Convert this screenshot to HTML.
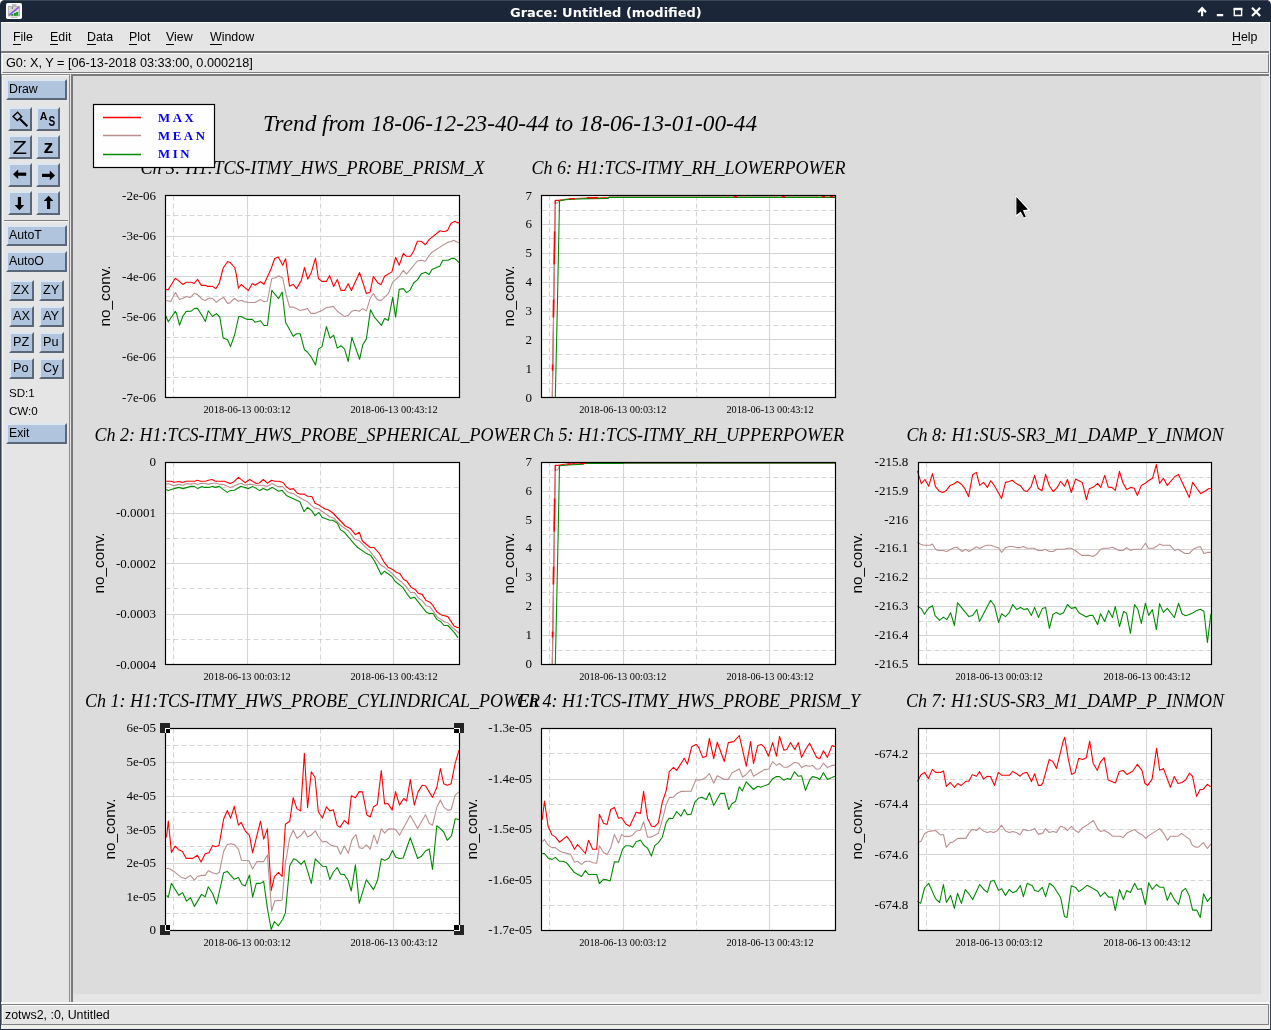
<!DOCTYPE html>
<html><head><meta charset="utf-8"><title>Grace: Untitled (modified)</title>
<style>
html,body{margin:0;padding:0;}
body{width:1271px;height:1030px;overflow:hidden;background:#fff;position:relative;font-family:"Liberation Sans",sans-serif;font-size:12px;color:#000;}
div{position:absolute;box-sizing:border-box;will-change:transform;}
#win{left:0;top:0;width:1271px;height:1030px;background:#1b2638;border-radius:5px 5px 0 0;}
#title{left:0;top:0;width:1271px;height:22px;color:#fff;font-family:"DejaVu Sans","Liberation Sans",sans-serif;font-weight:bold;font-size:13px;padding-left:510px;line-height:23px;white-space:nowrap;border-top:1px solid #3b4858;border-radius:5px 5px 0 0;}
#main{left:1px;top:22px;width:1269px;height:1007px;background:#e5e5e5;border-top:1px solid #fff;border-right:1px solid #f4f4f4;}
.mi{top:30px;height:14px;line-height:14px;font-size:12.4px;white-space:nowrap;}
.mi u{text-decoration:none;border-bottom:1px solid #000;}
.btn{background:#b0c4de;border-style:solid;border-width:2px;border-color:#dde5f0 #596779 #596779 #dde5f0;font-size:12.3px;line-height:1;white-space:nowrap;}
.lb{left:6px;width:61px;height:21px;padding:2px 0 0 1px;}
.sb{width:24px;height:24px;}
.tb{width:25px;height:21px;padding:2px 0 0 2px;font-size:12.7px;}
</style></head><body>
<div id="win"></div>
<div id="title">Grace: Untitled (modified)</div>
<div id="main"></div>
<div style="left:0;top:22px;width:1px;height:1008px;background:#323f4e"></div>
<div style="left:1270px;top:22px;width:1px;height:1008px;background:#323f4e"></div>
<!-- menu -->
<div class="mi" style="left:13px"><u>F</u>ile</div>
<div class="mi" style="left:50px"><u>E</u>dit</div>
<div class="mi" style="left:87px"><u>D</u>ata</div>
<div class="mi" style="left:129px"><u>P</u>lot</div>
<div class="mi" style="left:166px"><u>V</u>iew</div>
<div class="mi" style="left:210px"><u>W</u>indow</div>
<div class="mi" style="left:1232px"><u>H</u>elp</div>
<div style="left:1px;top:51px;width:1268px;height:2px;background:#7a7a7a"></div>
<!-- locator -->
<div style="left:2px;top:53px;width:1267px;height:20px;border:1px solid;border-color:#fbfbfb #7f7f7f #7f7f7f #fbfbfb;"></div>
<div style="left:1px;top:73px;width:1268px;height:1px;background:#f8f8f8"></div>
<div style="left:6px;top:56px;font-size:12.7px;line-height:14px;white-space:nowrap;">G0: X, Y = [06-13-2018 03:33:00, 0.000218]</div>
<!-- left panel -->
<div style="left:1px;top:74px;width:69px;height:929px;border:1px solid #8a8a8a;"></div>
<div style="left:2px;top:75px;width:67px;height:1px;background:#f6f6f6"></div>
<div style="left:2px;top:75px;width:1px;height:927px;background:#f6f6f6"></div>
<div class="btn lb" style="top:79px">Draw</div>
<div class="btn sb" style="left:8px;top:107px"></div>
<div class="btn sb" style="left:36px;top:107px"></div>
<div class="btn sb" style="left:8px;top:135px"></div>
<div class="btn sb" style="left:36px;top:135px"></div>
<div class="btn sb" style="left:8px;top:163px"></div>
<div class="btn sb" style="left:36px;top:163px"></div>
<div class="btn sb" style="left:8px;top:191px"></div>
<div class="btn sb" style="left:36px;top:191px"></div>

<div style="left:4px;top:220px;width:64px;height:1px;background:#7f7f7f"></div>
<div style="left:4px;top:221px;width:64px;height:1px;background:#f4f4f4"></div>
<div class="btn lb" style="top:225px">AutoT</div>
<div class="btn lb" style="top:251px">AutoO</div>
<div class="btn tb" style="left:9px;top:280px">ZX</div>
<div class="btn tb" style="left:39px;top:280px">ZY</div>
<div class="btn tb" style="left:9px;top:306px">AX</div>
<div class="btn tb" style="left:39px;top:306px">AY</div>
<div class="btn tb" style="left:9px;top:332px">PZ</div>
<div class="btn tb" style="left:39px;top:332px">Pu</div>
<div class="btn tb" style="left:9px;top:358px">Po</div>
<div class="btn tb" style="left:39px;top:358px">Cy</div>
<div style="left:9px;top:386px;line-height:14px;font-size:11.6px">SD:1</div>
<div style="left:9px;top:404px;line-height:14px;font-size:11.6px">CW:0</div>
<div class="btn lb" style="top:423px">Exit</div>
<!-- canvas frame -->
<div style="left:71px;top:74px;width:1198px;height:928px;border-left:2px solid #7a7a7a;border-top:2px solid #7a7a7a;background:#e5e5e5"></div>
<div id="canvas" style="left:73px;top:76px;width:1188px;height:918px;background:#dcdcdc;"></div>
<!-- bottom status -->
<div style="left:1px;top:1002px;width:1268px;height:2px;background:#f8f8f8"></div>
<div style="left:1px;top:1004px;width:1268px;height:21px;border:1px solid #808080;"></div>
<div style="left:2px;top:1005px;width:1266px;height:1px;background:#fafafa"></div>
<div style="left:2px;top:1005px;width:1px;height:19px;background:#fafafa"></div>
<div style="left:1px;top:1025px;width:1268px;height:4px;background:#efefec"></div>
<div style="left:5px;top:1008px;line-height:14px;font-size:12.4px;white-space:nowrap;">zotws2, :0, Untitled</div>
<svg width="1271" height="1030" viewBox="0 0 1271 1030" style="position:absolute;left:0;top:0;will-change:transform;opacity:0.999">
<g font-family="'Liberation Serif',serif" fill="#000">
<text x="510" y="131" font-size="23.25" font-style="italic" text-anchor="middle">Trend from 18-06-12-23-40-44 to 18-06-13-01-00-44</text>
<text x="312.5" y="173.7" font-size="18" font-style="italic" text-anchor="middle">Ch 3: H1:TCS-ITMY_HWS_PROBE_PRISM_X</text>
<rect x="165.5" y="195.5" width="294" height="202" fill="#fff"/>
<path d="M247.5 195.5V397.5" stroke="#d5d5d5" stroke-width="1.1"/><path d="M393.5 195.5V397.5" stroke="#d5d5d5" stroke-width="1.1"/><path d="M173.5 195.5V397.5" stroke="#d5d5d5" stroke-width="1.1" stroke-dasharray="5 3"/><path d="M320.5 195.5V397.5" stroke="#d5d5d5" stroke-width="1.1" stroke-dasharray="5 3"/><path d="M165.5 236.5H459.5" stroke="#d5d5d5" stroke-width="1.1"/><path d="M165.5 276.5H459.5" stroke="#d5d5d5" stroke-width="1.1"/><path d="M165.5 316.5H459.5" stroke="#d5d5d5" stroke-width="1.1"/><path d="M165.5 357.5H459.5" stroke="#d5d5d5" stroke-width="1.1"/><path d="M165.5 215.5H459.5" stroke="#d5d5d5" stroke-width="1.1" stroke-dasharray="5 3"/><path d="M165.5 256.5H459.5" stroke="#d5d5d5" stroke-width="1.1" stroke-dasharray="5 3"/><path d="M165.5 296.5H459.5" stroke="#d5d5d5" stroke-width="1.1" stroke-dasharray="5 3"/><path d="M165.5 337.5H459.5" stroke="#d5d5d5" stroke-width="1.1" stroke-dasharray="5 3"/><path d="M165.5 377.5H459.5" stroke="#d5d5d5" stroke-width="1.1" stroke-dasharray="5 3"/>
<g fill="none" stroke-width="1.1" stroke-linejoin="round" clip-path="none">
<polyline points="165.9,289.6 168.3,289.6 175.3,278.3 178.5,280.6 182.9,284.5 186.3,282.3 191.2,282.3 194.1,283.5 197.5,279.3 201.3,285.4 205.7,285.4 207.7,286.4 212.5,286.4 215.9,288.6 219.3,283 223.2,268 227.6,261.5 230,262.4 234.7,267.5 236.3,274.3 238.5,288.3 241.2,284.5 248.4,290.6 252.3,283.5 255,285.3 260.5,281.7 264,284.3 271,269 274.7,258.5 278.3,257 282.7,265.3 285.6,258.8 289.5,286.2 293.2,284.3 296.5,288.6 301.3,280.6 304.5,267.5 307.7,279.2 311.1,273.1 315.5,258.1 318.4,278.5 321.7,281.4 326.4,281.4 329.6,275.5 333.7,286.5 337.3,279.5 340.9,290.4 344.6,290.4 348.2,283.8 351.4,290.4 359.6,272.6 366.4,293.5 370.1,292.3 373.3,276.6 378.1,283.1 381,284.7 384.6,276.3 391.9,271.9 395.6,257.3 399.2,265.3 403.3,253.4 406.5,256.3 410.6,256.3 413.8,250.8 417.4,241.3 421.1,241.3 425.4,244.7 429.1,239.6 440,230.8 442.8,231.5 445,231.5 447.6,230.2 451.1,223.2 455.1,221.2 456.8,222.6 459.4,222.6" stroke="#ff0000"/>
<polyline points="165.9,300.5 170.8,301.5 175.3,292.4 179.5,299.5 182.9,298.3 186.8,296.4 190.2,297.6 194.6,293.2 197.5,294.5 202.3,299.3 205.2,300.5 208.6,298.3 212.5,298.3 216.4,302.4 219.8,299.5 223.7,297.4 227.6,303.4 230,302.9 234.4,298.5 238.5,301.3 241.6,300.3 243.6,301.5 247.5,302.4 255,302.5 260.5,299.6 264,301.8 267.4,301 271.8,278.5 275.4,277.7 278.6,275.8 282.7,278 285.9,293.7 289.5,307.1 293.2,307.1 300.2,310.5 307.4,308.6 311.1,313.4 314.7,313.4 322,310.5 326.4,307.6 329.6,307.1 333.2,306.4 337.3,311.2 344.6,316.6 348.2,315.3 351.9,311.2 355.5,310.2 359.2,311.2 362.8,308.6 366.4,310.9 370.1,298.8 373.3,293.5 377.4,299.6 381,300.6 388.3,293.7 392.7,282.1 399.2,276.3 403.3,270.4 406.5,274.1 417.4,261 421.1,260.2 425.4,261.3 429.1,255.6 432,252.2 440,247.1 442.8,245.2 447.6,242.4 451.1,241.5 453.8,240.2 456.8,242 459.4,242.8" stroke="#bc8f8f"/>
<polyline points="165.9,316 168.3,321.7 175.3,311.4 176.6,313.6 179.5,325.2 182.9,316 186.3,311.4 191.2,311.2 194.6,308.4 197.5,308.4 202.3,316 205.4,321.4 208.3,310.7 212.5,316.5 216.4,313.6 219.8,317 223.2,337.9 227.6,339.8 230.5,346.6 234.7,334.5 238.7,316.5 241.2,316.5 245,318.4 247.5,319.4 252.3,319.4 255,322.2 260.5,320.7 264,325.5 267.4,325.5 271.8,290.4 278.6,298.6 282.2,292 285.6,322.2 293.2,336.3 296.5,333.8 300.2,333.8 304.5,349.8 307.4,352 311.1,356.8 315.5,365.1 318.4,349.1 322,346.6 326.4,326.5 330,338.2 333.7,335.3 337.3,348.1 340.9,345.7 344.6,349.1 348.2,361.5 351.9,337.4 359.6,359.3 362.8,344.7 366.4,338.9 370.5,309.8 374.4,317.1 381.4,325.4 384.6,318.5 388.3,320.4 392.7,297.4 395.6,317.1 399.2,289.4 403.3,288.6 406.5,292.6 410.1,290.1 413.8,282.8 417.4,279.9 421.1,274.1 425.4,272.2 429.1,274.5 432,269.4 440,266.1 442.8,260.3 448.1,260.3 451.6,258.4 454.6,258.4 459.4,262.9" stroke="#008b00"/>
</g>
<rect x="165.5" y="195.5" width="294" height="202" fill="none" stroke="#000" stroke-width="1.2"/>
<text x="156" y="199.8" font-size="13" text-anchor="end">-2e-06</text>
<text x="156" y="240.2" font-size="13" text-anchor="end">-3e-06</text>
<text x="156" y="280.6" font-size="13" text-anchor="end">-4e-06</text>
<text x="156" y="321" font-size="13" text-anchor="end">-5e-06</text>
<text x="156" y="361.4" font-size="13" text-anchor="end">-6e-06</text>
<text x="156" y="401.8" font-size="13" text-anchor="end">-7e-06</text>
<text x="247.1" y="413.1" font-size="10.3" text-anchor="middle">2018-06-13 00:03:12</text>
<text x="394" y="413.1" font-size="10.3" text-anchor="middle">2018-06-13 00:43:12</text>
<text transform="translate(109.5,296) rotate(-90)" font-family="'Liberation Sans',sans-serif" font-size="15.3" text-anchor="middle">no_conv.</text>
<text x="688.5" y="173.7" font-size="18" font-style="italic" text-anchor="middle">Ch 6: H1:TCS-ITMY_RH_LOWERPOWER</text>
<rect x="541.5" y="195.5" width="294" height="202" fill="#fff"/>
<path d="M623.5 195.5V397.5" stroke="#d5d5d5" stroke-width="1.1"/><path d="M769.5 195.5V397.5" stroke="#d5d5d5" stroke-width="1.1"/><path d="M549.5 195.5V397.5" stroke="#d5d5d5" stroke-width="1.1" stroke-dasharray="5 3"/><path d="M696.5 195.5V397.5" stroke="#d5d5d5" stroke-width="1.1" stroke-dasharray="5 3"/><path d="M541.5 224.5H835.5" stroke="#d5d5d5" stroke-width="1.1"/><path d="M541.5 253.5H835.5" stroke="#d5d5d5" stroke-width="1.1"/><path d="M541.5 282.5H835.5" stroke="#d5d5d5" stroke-width="1.1"/><path d="M541.5 311.5H835.5" stroke="#d5d5d5" stroke-width="1.1"/><path d="M541.5 339.5H835.5" stroke="#d5d5d5" stroke-width="1.1"/><path d="M541.5 368.5H835.5" stroke="#d5d5d5" stroke-width="1.1"/><path d="M541.5 210.5H835.5" stroke="#d5d5d5" stroke-width="1.1" stroke-dasharray="5 3"/><path d="M541.5 238.5H835.5" stroke="#d5d5d5" stroke-width="1.1" stroke-dasharray="5 3"/><path d="M541.5 267.5H835.5" stroke="#d5d5d5" stroke-width="1.1" stroke-dasharray="5 3"/><path d="M541.5 296.5H835.5" stroke="#d5d5d5" stroke-width="1.1" stroke-dasharray="5 3"/><path d="M541.5 325.5H835.5" stroke="#d5d5d5" stroke-width="1.1" stroke-dasharray="5 3"/><path d="M541.5 354.5H835.5" stroke="#d5d5d5" stroke-width="1.1" stroke-dasharray="5 3"/><path d="M541.5 383.5H835.5" stroke="#d5d5d5" stroke-width="1.1" stroke-dasharray="5 3"/>
<g fill="none" stroke-width="1.1" stroke-linejoin="round" clip-path="none">
<polyline points="552.3,397.5 555.3,200.4 559.5,200.1 566,199.2 575,198.6 587,198.1 598,198 608,197.6 609,197.3 835.5,197.3" stroke="#ff0000"/>
<polyline points="552.35,397.5 555.35,203 557.4,203 558.6,201.5 559.5,200.6 565,199.6 576,198.8 608,198.3 609,197.4 835.5,197.4" stroke="#bc8f8f"/>
<polyline points="555.3,397.5 557.5,300 559.5,201 565,199.8 576,199 590,198.6 608,198.4 609,197.4 835.5,197.4" stroke="#008b00"/>
<polyline points="554.628,231.5 554.125,264.5" stroke="#ff0000" stroke-width="1.6"/>
<polyline points="553.592,299.5 553.318,317.5" stroke="#ff0000" stroke-width="1.6"/>
<polyline points="552.603,364.5 552.511,370.5" stroke="#ff0000" stroke-width="1.6"/>
<polyline points="555.3,204 555.3,200.5 559.6,200.5" stroke="#ff0000" stroke-width="1.1"/>
<polyline points="569,198.9 575,198.7" stroke="#ff0000" stroke-width="1.3"/>
<polyline points="587,197.8 598,197.8" stroke="#ff0000" stroke-width="1.5"/>
<polyline points="734,196.6 737,196.6" stroke="#ff0000" stroke-width="1.6"/>
<polyline points="782,196.6 785,196.6" stroke="#ff0000" stroke-width="1.6"/>
<polyline points="822,196.6 825,196.6" stroke="#ff0000" stroke-width="1.6"/>
<polyline points="830,196.6 833,196.6" stroke="#ff0000" stroke-width="1.6"/>
</g>
<rect x="541.5" y="195.5" width="294" height="202" fill="none" stroke="#000" stroke-width="1.2"/>
<text x="532" y="199.6" font-size="13" text-anchor="end">7</text>
<text x="532" y="228.457" font-size="13" text-anchor="end">6</text>
<text x="532" y="257.314" font-size="13" text-anchor="end">5</text>
<text x="532" y="286.171" font-size="13" text-anchor="end">4</text>
<text x="532" y="315.029" font-size="13" text-anchor="end">3</text>
<text x="532" y="343.886" font-size="13" text-anchor="end">2</text>
<text x="532" y="372.743" font-size="13" text-anchor="end">1</text>
<text x="532" y="401.6" font-size="13" text-anchor="end">0</text>
<text x="622.8" y="413.1" font-size="10.3" text-anchor="middle">2018-06-13 00:03:12</text>
<text x="770" y="413.1" font-size="10.3" text-anchor="middle">2018-06-13 00:43:12</text>
<text transform="translate(513.5,296) rotate(-90)" font-family="'Liberation Sans',sans-serif" font-size="15.3" text-anchor="middle">no_conv.</text>
<text x="312.5" y="440.7" font-size="18" font-style="italic" text-anchor="middle">Ch 2: H1:TCS-ITMY_HWS_PROBE_SPHERICAL_POWER</text>
<rect x="165.5" y="462.5" width="294" height="202" fill="#fff"/>
<path d="M247.5 462.5V664.5" stroke="#d5d5d5" stroke-width="1.1"/><path d="M393.5 462.5V664.5" stroke="#d5d5d5" stroke-width="1.1"/><path d="M173.5 462.5V664.5" stroke="#d5d5d5" stroke-width="1.1" stroke-dasharray="5 3"/><path d="M320.5 462.5V664.5" stroke="#d5d5d5" stroke-width="1.1" stroke-dasharray="5 3"/><path d="M165.5 513.5H459.5" stroke="#d5d5d5" stroke-width="1.1"/><path d="M165.5 563.5H459.5" stroke="#d5d5d5" stroke-width="1.1"/><path d="M165.5 614.5H459.5" stroke="#d5d5d5" stroke-width="1.1"/><path d="M165.5 487.5H459.5" stroke="#d5d5d5" stroke-width="1.1" stroke-dasharray="5 3"/><path d="M165.5 538.5H459.5" stroke="#d5d5d5" stroke-width="1.1" stroke-dasharray="5 3"/><path d="M165.5 588.5H459.5" stroke="#d5d5d5" stroke-width="1.1" stroke-dasharray="5 3"/><path d="M165.5 639.5H459.5" stroke="#d5d5d5" stroke-width="1.1" stroke-dasharray="5 3"/>
<g fill="none" stroke-width="1.1" stroke-linejoin="round" clip-path="none">
<polyline points="166,481.2 171.3,481.2 174.2,482.3 178.9,481.5 182.5,482.4 186,481.2 194.9,481.2 197.2,480.3 200.8,481.2 205.5,481.2 208.4,480.3 212,479.5 215.5,481.2 224.4,481.2 230.3,483.6 233.2,482.3 238.5,477.3 245,482.7 249.7,479.5 256.2,483.5 259.2,483 263.3,479.5 267.4,483.2 271.6,480.3 274.5,481.2 279.3,481.2 283.4,482.7 286.3,486.8 289.9,489.4 293.4,488.6 297.5,493.3 299.9,494.1 304,494.1 307.6,496.2 311.9,496.5 315,503.2 318.9,505.1 325.1,509 328.2,509.7 332.9,513 345.3,526 350.7,528.8 355.4,534.6 359.3,532.3 362.4,541 370.1,547.5 374,547.5 379.5,553.7 384.1,562.2 388,567.2 392.7,569.5 395.8,571.9 399.7,573.4 403.5,579.3 406.6,580.9 411.3,587.4 415.2,589.4 418.3,593.3 422.2,594.4 426.1,600.6 429.9,602.2 433,605.7 436.9,611.9 441.6,615 447.8,616.6 454,625.9 457.1,627.5 459.5,627.5" stroke="#ff0000"/>
<polyline points="166,484.4 168.3,483.8 174.2,485.6 178.9,484.4 183.1,485.3 186.6,483.6 191.3,484.1 194.3,483.2 197.8,484.4 201.4,483.2 205.5,483.5 208.4,484.4 212.6,483.2 216.1,483.2 219.7,484.2 223.2,484.4 230.3,487.4 237.4,484.4 240.9,483.2 245,485.3 250.3,484.1 256.2,485.3 263.3,485.3 266.9,486.4 272.2,483.5 277.5,486.5 282.8,486.5 286.9,491.5 289.9,492.9 293.4,493.6 297.5,496.2 304,500 307.6,501.8 314.2,507.9 318.9,509 329.7,516.7 333.6,518 341.4,526 348.4,530.7 354.6,538.9 359.3,540.8 370.1,551.4 381,565.3 384.1,566.9 391.9,573.1 396.5,578.1 401.2,581.7 405.9,586.3 410.5,592.5 414.4,592.5 418.3,598 422.2,600.6 426.1,605.7 429.9,606.8 433,610.9 436.9,616.6 444.7,622 447.8,622.8 452.5,627.5 459.5,633.7" stroke="#bc8f8f"/>
<polyline points="166,489.4 168.3,490.6 174.2,488.6 178.9,487.4 183.1,488.6 190.7,486.4 194.3,486.4 197.8,488.6 201.9,486.4 204.3,487.4 209,487.4 212,486.4 215.5,487.4 219.1,486.4 227.3,492.4 230.3,490.6 234.4,490.3 240.9,486.2 244.4,487.4 248.6,488.6 252.7,486.4 259.8,490.6 263.3,488.6 266.9,490.3 272.2,487.4 278.7,491.3 282.2,490.3 286.3,495.4 299.9,501.8 304,511.6 307.6,507.4 311.7,510.6 315,515.6 318.9,512.5 322,517.2 329.7,520.3 332.9,520.3 337.5,523.4 340.6,529.9 344.5,532.3 354.6,544.4 357.7,547.5 365.5,552.9 370.9,555.6 374.8,561.5 381.3,574.7 384.4,571.2 391.9,576.5 395,581.2 402.8,587.4 406.6,593.3 410.5,598.4 414.4,597.2 426.1,611.9 429.2,613.5 433,613.5 436.9,619.4 440.8,621.7 443.9,625.5 447.8,625.5 454,632.1 457.9,637.6" stroke="#008b00"/>
</g>
<rect x="165.5" y="462.5" width="294" height="202" fill="none" stroke="#000" stroke-width="1.2"/>
<text x="156" y="465.6" font-size="13" text-anchor="end">0</text>
<text x="156" y="517.3" font-size="13" text-anchor="end">-0.0001</text>
<text x="156" y="567.8" font-size="13" text-anchor="end">-0.0002</text>
<text x="156" y="618.3" font-size="13" text-anchor="end">-0.0003</text>
<text x="156" y="668.8" font-size="13" text-anchor="end">-0.0004</text>
<text x="247.1" y="680.1" font-size="10.3" text-anchor="middle">2018-06-13 00:03:12</text>
<text x="394" y="680.1" font-size="10.3" text-anchor="middle">2018-06-13 00:43:12</text>
<text transform="translate(103.5,563) rotate(-90)" font-family="'Liberation Sans',sans-serif" font-size="15.3" text-anchor="middle">no_conv.</text>
<text x="688.5" y="440.7" font-size="18" font-style="italic" text-anchor="middle">Ch 5: H1:TCS-ITMY_RH_UPPERPOWER</text>
<rect x="541.5" y="462.5" width="294" height="202" fill="#fff"/>
<path d="M623.5 462.5V664.5" stroke="#d5d5d5" stroke-width="1.1"/><path d="M769.5 462.5V664.5" stroke="#d5d5d5" stroke-width="1.1"/><path d="M549.5 462.5V664.5" stroke="#d5d5d5" stroke-width="1.1" stroke-dasharray="5 3"/><path d="M696.5 462.5V664.5" stroke="#d5d5d5" stroke-width="1.1" stroke-dasharray="5 3"/><path d="M541.5 491.5H835.5" stroke="#d5d5d5" stroke-width="1.1"/><path d="M541.5 520.5H835.5" stroke="#d5d5d5" stroke-width="1.1"/><path d="M541.5 549.5H835.5" stroke="#d5d5d5" stroke-width="1.1"/><path d="M541.5 578.5H835.5" stroke="#d5d5d5" stroke-width="1.1"/><path d="M541.5 606.5H835.5" stroke="#d5d5d5" stroke-width="1.1"/><path d="M541.5 635.5H835.5" stroke="#d5d5d5" stroke-width="1.1"/><path d="M541.5 477.5H835.5" stroke="#d5d5d5" stroke-width="1.1" stroke-dasharray="5 3"/><path d="M541.5 505.5H835.5" stroke="#d5d5d5" stroke-width="1.1" stroke-dasharray="5 3"/><path d="M541.5 534.5H835.5" stroke="#d5d5d5" stroke-width="1.1" stroke-dasharray="5 3"/><path d="M541.5 563.5H835.5" stroke="#d5d5d5" stroke-width="1.1" stroke-dasharray="5 3"/><path d="M541.5 592.5H835.5" stroke="#d5d5d5" stroke-width="1.1" stroke-dasharray="5 3"/><path d="M541.5 621.5H835.5" stroke="#d5d5d5" stroke-width="1.1" stroke-dasharray="5 3"/><path d="M541.5 650.5H835.5" stroke="#d5d5d5" stroke-width="1.1" stroke-dasharray="5 3"/>
<g fill="none" stroke-width="1.1" stroke-linejoin="round" clip-path="none">
<polyline points="552.3,664.5 555.3,465.4 559.5,465.1 565,464.3 572,463.7 575,463.2 583,463.2 835.5,463" stroke="#ff0000"/>
<polyline points="552.35,664.5 555.35,470 557.4,470 558.6,468.5 559.5,465.8 568,464.8 583,464 584,463.4 835.5,463.2" stroke="#bc8f8f"/>
<polyline points="555.3,664.5 557.5,566 559.5,465.8 568,465 583,464.3 584,463.5 623,463.5 624,463 835.5,463" stroke="#008b00"/>
<polyline points="554.628,498.5 554.125,531.5" stroke="#ff0000" stroke-width="1.6"/>
<polyline points="553.592,566.5 553.318,584.5" stroke="#ff0000" stroke-width="1.6"/>
<polyline points="552.603,631.5 552.511,637.5" stroke="#ff0000" stroke-width="1.6"/>
<polyline points="555.3,471 555.3,465.5 559.6,465.5" stroke="#ff0000" stroke-width="1.1"/>
<polyline points="567,464.2 571,464" stroke="#ff0000" stroke-width="1.3"/>
<polyline points="580,463.3 585,463.3" stroke="#ff0000" stroke-width="1.5"/>
</g>
<rect x="541.5" y="462.5" width="294" height="202" fill="none" stroke="#000" stroke-width="1.2"/>
<text x="532" y="465.8" font-size="13" text-anchor="end">7</text>
<text x="532" y="494.657" font-size="13" text-anchor="end">6</text>
<text x="532" y="523.514" font-size="13" text-anchor="end">5</text>
<text x="532" y="552.371" font-size="13" text-anchor="end">4</text>
<text x="532" y="581.229" font-size="13" text-anchor="end">3</text>
<text x="532" y="610.086" font-size="13" text-anchor="end">2</text>
<text x="532" y="638.943" font-size="13" text-anchor="end">1</text>
<text x="532" y="667.8" font-size="13" text-anchor="end">0</text>
<text x="622.8" y="680.1" font-size="10.3" text-anchor="middle">2018-06-13 00:03:12</text>
<text x="770" y="680.1" font-size="10.3" text-anchor="middle">2018-06-13 00:43:12</text>
<text transform="translate(513.5,563) rotate(-90)" font-family="'Liberation Sans',sans-serif" font-size="15.3" text-anchor="middle">no_conv.</text>
<text x="1065" y="440.7" font-size="18" font-style="italic" text-anchor="middle">Ch 8: H1:SUS-SR3_M1_DAMP_Y_INMON</text>
<rect x="918.5" y="462.5" width="293" height="202" fill="#fff"/>
<path d="M999.5 462.5V664.5" stroke="#d5d5d5" stroke-width="1.1"/><path d="M1146.5 462.5V664.5" stroke="#d5d5d5" stroke-width="1.1"/><path d="M926.5 462.5V664.5" stroke="#d5d5d5" stroke-width="1.1" stroke-dasharray="5 3"/><path d="M1073.5 462.5V664.5" stroke="#d5d5d5" stroke-width="1.1" stroke-dasharray="5 3"/><path d="M918.5 491.5H1211.5" stroke="#d5d5d5" stroke-width="1.1"/><path d="M918.5 520.5H1211.5" stroke="#d5d5d5" stroke-width="1.1"/><path d="M918.5 549.5H1211.5" stroke="#d5d5d5" stroke-width="1.1"/><path d="M918.5 578.5H1211.5" stroke="#d5d5d5" stroke-width="1.1"/><path d="M918.5 606.5H1211.5" stroke="#d5d5d5" stroke-width="1.1"/><path d="M918.5 635.5H1211.5" stroke="#d5d5d5" stroke-width="1.1"/><path d="M918.5 477.5H1211.5" stroke="#d5d5d5" stroke-width="1.1" stroke-dasharray="5 3"/><path d="M918.5 505.5H1211.5" stroke="#d5d5d5" stroke-width="1.1" stroke-dasharray="5 3"/><path d="M918.5 534.5H1211.5" stroke="#d5d5d5" stroke-width="1.1" stroke-dasharray="5 3"/><path d="M918.5 563.5H1211.5" stroke="#d5d5d5" stroke-width="1.1" stroke-dasharray="5 3"/><path d="M918.5 592.5H1211.5" stroke="#d5d5d5" stroke-width="1.1" stroke-dasharray="5 3"/><path d="M918.5 621.5H1211.5" stroke="#d5d5d5" stroke-width="1.1" stroke-dasharray="5 3"/><path d="M918.5 650.5H1211.5" stroke="#d5d5d5" stroke-width="1.1" stroke-dasharray="5 3"/>
<g fill="none" stroke-width="1.1" stroke-linejoin="round" clip-path="none">
<polyline points="917.4,470.9 921.3,483.6 924.9,479.5 928.7,486.2 932.5,473.6 935.5,486.6 939,490.9 942.6,492.5 946.1,490.7 950.2,485.4 953.8,484 957.3,481.5 961.4,484.2 965,488.9 968.5,496.6 972.7,474.8 976.4,472.4 979.7,485.4 983.5,482.4 987.4,487.4 990.6,480.7 993.9,484.8 1001.6,498.4 1005.5,482.4 1009.2,481.5 1012.2,480.3 1016.3,483.6 1020.4,485.7 1024,490.4 1026.9,491.6 1031.1,486.6 1034.6,475.3 1038.2,488.3 1042,490.7 1045.6,474.4 1049.4,486 1053.3,491.6 1057,487.7 1060.6,481.5 1064.5,486.2 1067.5,479.5 1071.3,492.5 1075.6,479.1 1078.8,480.7 1082.3,482.4 1086.4,499.5 1089.4,488.7 1093.5,487.1 1097.6,483.4 1100.8,487.4 1104.7,475.3 1108.3,487.1 1111.8,487.4 1115.3,490.4 1119.5,471.4 1123,483 1126.6,489.5 1130.7,487.4 1134.2,488.3 1137.4,495.4 1141.3,485.4 1144.8,483.6 1148.4,480.7 1152.5,478.3 1156.4,464.5 1159.6,483.4 1163.4,478.3 1167.3,485.4 1174.9,476.5 1178.5,474.4 1189.3,497.5 1192.6,482.4 1196.8,488.3 1200.7,493.6 1205,491.3 1208.6,488.7 1211.5,488.3" stroke="#ff0000"/>
<polyline points="917.4,542.3 920.1,544 923.7,545.2 930.2,545.2 932.5,544 935.5,549.3 937.8,550.5 943.1,550.5 946.7,551.5 953.8,547.7 957.3,547.3 962,551.5 965.6,549.3 968.9,551.5 972.7,549.3 976.4,546.7 979.7,548.5 983.3,546.5 986.8,545.3 990.9,545.3 993.9,546.5 998.6,547.7 1001.6,552.4 1005.5,547.7 1009.2,546.5 1012.8,546.5 1016.3,547.6 1020.4,547.6 1023.4,546.5 1026.9,548.3 1034,548.3 1038.2,550.5 1042.3,550.5 1045.2,549.3 1049.4,551.5 1052.9,551.5 1057,549.3 1064.5,549.3 1067.5,548.3 1071.3,548.3 1075.2,550.5 1081.7,555.4 1089.4,555.4 1092.9,556.5 1096.5,554.4 1100.6,549.3 1104.1,548.3 1108.3,548.3 1112.4,547.3 1115.3,548.5 1118.9,550.5 1123,550.5 1126.6,547.6 1130.7,550.5 1134.2,549.3 1141.3,549.3 1145.4,543.2 1148.4,548.3 1153.7,548.3 1159.6,544.1 1162.5,545.3 1170.2,545.3 1174.4,550.5 1177.9,549.3 1185,553.5 1189.1,553.5 1193.2,549.3 1196.8,547.6 1200.3,546.5 1203.9,553.5 1207.4,552.4 1211.5,552.4" stroke="#bc8f8f"/>
<polyline points="917.4,606.2 921.3,608.6 924.5,614.3 928.7,608 932.5,605.7 935.1,615.7 939.6,620.4 943.4,617.1 946.9,619.6 950.6,612.7 954.4,625.5 957.5,602.7 968.9,616.6 972.7,615.4 976.8,609.5 979.5,621.4 990.6,600.3 994.5,605.7 998.6,622.5 1001.6,613.7 1005.5,616.6 1009.2,612.7 1012.8,604.5 1016.6,609.5 1020.4,607.4 1024,609.5 1027.5,608.6 1031.4,615.4 1034.6,607.4 1038.5,617.5 1042.3,608.6 1045.6,607.4 1049.4,628.4 1052.9,614.5 1056.4,612.4 1060,614.5 1063.5,612.7 1067.5,604.5 1071.3,608.4 1075.6,607.4 1078.8,612.7 1086.4,617.1 1089.4,615.4 1092.9,615.4 1097.6,624.5 1100.6,613.7 1104.7,621.4 1108.6,610.4 1112.4,617.5 1115.3,606.5 1119.5,626.5 1123.6,611.6 1126.6,613.3 1130.4,633.4 1134.6,604.5 1137.8,609.2 1141.3,623.4 1145.4,603.3 1148.7,615.4 1152.3,609.5 1156.4,629.6 1159.6,603.6 1163.4,612.4 1167.3,608.4 1174.4,617.5 1178.5,603.3 1182,613.7 1185.6,615.7 1189.1,614.5 1193.2,612.7 1196.8,610.4 1200.3,609.2 1203.9,611.2 1207.4,642.5 1210.9,613.9" stroke="#008b00"/>
</g>
<rect x="918.5" y="462.5" width="293" height="202" fill="none" stroke="#000" stroke-width="1.2"/>
<text x="908.2" y="465.8" font-size="13" text-anchor="end">-215.8</text>
<text x="908.2" y="494.657" font-size="13" text-anchor="end">-215.9</text>
<text x="908.2" y="523.514" font-size="13" text-anchor="end">-216</text>
<text x="908.2" y="552.371" font-size="13" text-anchor="end">-216.1</text>
<text x="908.2" y="581.229" font-size="13" text-anchor="end">-216.2</text>
<text x="908.2" y="610.086" font-size="13" text-anchor="end">-216.3</text>
<text x="908.2" y="638.943" font-size="13" text-anchor="end">-216.4</text>
<text x="908.2" y="667.8" font-size="13" text-anchor="end">-216.5</text>
<text x="999" y="680.1" font-size="10.3" text-anchor="middle">2018-06-13 00:03:12</text>
<text x="1147" y="680.1" font-size="10.3" text-anchor="middle">2018-06-13 00:43:12</text>
<text transform="translate(861.7,563) rotate(-90)" font-family="'Liberation Sans',sans-serif" font-size="15.3" text-anchor="middle">no_conv.</text>
<text x="312.5" y="706.7" font-size="18" font-style="italic" text-anchor="middle">Ch 1: H1:TCS-ITMY_HWS_PROBE_CYLINDRICAL_POWER</text>
<rect x="165.5" y="728.5" width="294" height="202" fill="#fff"/>
<path d="M247.5 728.5V930.5" stroke="#d5d5d5" stroke-width="1.1"/><path d="M393.5 728.5V930.5" stroke="#d5d5d5" stroke-width="1.1"/><path d="M173.5 728.5V930.5" stroke="#d5d5d5" stroke-width="1.1" stroke-dasharray="5 3"/><path d="M320.5 728.5V930.5" stroke="#d5d5d5" stroke-width="1.1" stroke-dasharray="5 3"/><path d="M165.5 762.5H459.5" stroke="#d5d5d5" stroke-width="1.1"/><path d="M165.5 796.5H459.5" stroke="#d5d5d5" stroke-width="1.1"/><path d="M165.5 829.5H459.5" stroke="#d5d5d5" stroke-width="1.1"/><path d="M165.5 863.5H459.5" stroke="#d5d5d5" stroke-width="1.1"/><path d="M165.5 897.5H459.5" stroke="#d5d5d5" stroke-width="1.1"/><path d="M165.5 745.5H459.5" stroke="#d5d5d5" stroke-width="1.1" stroke-dasharray="5 3"/><path d="M165.5 779.5H459.5" stroke="#d5d5d5" stroke-width="1.1" stroke-dasharray="5 3"/><path d="M165.5 812.5H459.5" stroke="#d5d5d5" stroke-width="1.1" stroke-dasharray="5 3"/><path d="M165.5 846.5H459.5" stroke="#d5d5d5" stroke-width="1.1" stroke-dasharray="5 3"/><path d="M165.5 880.5H459.5" stroke="#d5d5d5" stroke-width="1.1" stroke-dasharray="5 3"/><path d="M165.5 913.5H459.5" stroke="#d5d5d5" stroke-width="1.1" stroke-dasharray="5 3"/>
<g fill="none" stroke-width="1.1" stroke-linejoin="round" clip-path="none">
<polyline points="166.5,837.2 168.3,821 171.4,852.4 175.1,846.1 178.8,849.8 182.5,851.6 186.2,858.4 192.8,858.4 197.4,855.3 201.1,862.1 205.2,853.8 208.9,852.9 212.6,845.5 215.3,846.8 219,845.5 223.6,819.3 227.3,810.5 230.7,818.2 234.3,806.4 238.4,825.2 241.2,822.5 245.2,830.8 249.5,835.4 252.6,852.9 260.5,821.2 263.7,839.1 267.4,828.9 271.2,890.7 274.4,876.9 278.4,872.3 282.1,876.3 285.4,824.3 289.7,821.2 293.2,797.6 296.9,808.6 300.6,810.9 304.4,753.3 307.6,807.7 311.3,771.7 315,777.3 318.3,811.7 322.4,818 326.5,806.8 329.8,810.9 333.4,809.8 337.2,825.4 340,827.4 344.3,820.5 348.3,824.1 351.3,795.7 355.4,797.7 359.2,791.6 362.5,791.9 366.9,815 370.2,817 373.5,806.8 377.3,804.6 381.3,770.5 384.6,804 387.9,803.5 392.2,810.1 395.5,791.6 399.5,805.1 403.7,798.5 406.6,801 410.3,779.6 414.3,805.1 418.1,791.9 422.2,785.3 425.5,785.8 432.5,797.4 436.8,787.5 440.4,768.5 443.7,783.7 447.3,785.3 451.1,783.7 455.2,763.1 459,750.2" stroke="#ff0000"/>
<polyline points="166.5,868.2 170.1,869 175.1,872.3 180.7,876.9 185.3,878.7 190.4,875.4 194.5,880.2 197.4,876.5 201.5,875.4 205.2,875.4 208.3,870.8 212.6,872.8 216.3,874.1 219.4,872.3 223.6,851.4 227.3,844.6 231,843.7 234.3,844.6 238.4,849.2 241.5,860.3 248.9,860.7 252.6,869 256.8,861.6 263.7,861.6 267.4,855.1 271.6,911 274.7,900.9 282.1,900.3 285.4,863.1 289.7,838.2 293.2,830.2 296.9,838.2 300.6,835.8 304.4,830.8 307.6,836.9 311.3,835 315.3,830.8 318.3,836.5 322.4,841.9 326.2,841.5 331.5,845.6 337.2,846.7 340.5,854.2 344.3,845.9 348.3,853.3 352.1,839.3 355.9,834.5 359.2,847.7 362.8,848.4 366.4,844.8 370.2,849.2 374,834.9 377.3,843.9 381.3,828.7 384.6,833.2 388.9,828.7 395.5,829.4 399.5,835.3 410.3,815.5 417.6,828.6 425.5,814.7 429.2,823.3 432.5,825.3 436.8,807.3 440.4,799.9 443.7,807.1 447.8,810.4 451.1,809.6 455.2,795.2 459,791.9" stroke="#bc8f8f"/>
<polyline points="166.5,895.3 168.3,897.2 171.4,883.4 178.8,895.3 182.5,892.6 186.7,901.2 190.4,897.6 194.5,906.4 201.5,894.4 205.2,896.8 208.3,886.7 212.6,893.5 216.6,904 223.6,872.7 227.3,871.4 234.3,879.3 238.4,877.4 242.1,884.6 245.2,886.1 249.5,875 252.6,897.2 256.3,883.4 260.5,883.4 263.7,881.5 267.4,908.3 271.2,929.5 274.4,921.5 278.4,925.8 282.7,919.3 285.4,912.9 289.7,865.8 293.7,858.8 296.9,860.3 301.1,864.4 304.4,860.7 311.3,883.4 315.3,858.8 322.4,866.2 326.2,866.5 329.8,879.4 333.4,872 337.2,867.5 340.5,874.1 344.3,874.5 348,880.2 351.3,891 355.4,864.9 359.2,903.3 366.4,879.7 373.5,889.6 377.7,879.7 381.3,858.8 385.1,860.4 388.9,858 392.5,850.5 395.5,857.1 399.1,858.5 403.2,858 410.3,837.7 417.6,858.5 421.4,856.3 425.5,851 429.2,848.9 432.5,869.5 436.8,825.8 440.4,828.6 443.7,832 447.3,840.3 451.6,835.7 455.2,818.8 459,819.5" stroke="#008b00"/>
</g>
<rect x="165.5" y="728.5" width="294" height="202" fill="none" stroke="#000" stroke-width="1.2"/>
<text x="156" y="731.8" font-size="13" text-anchor="end">6e-05</text>
<text x="156" y="766.267" font-size="13" text-anchor="end">5e-05</text>
<text x="156" y="799.933" font-size="13" text-anchor="end">4e-05</text>
<text x="156" y="833.6" font-size="13" text-anchor="end">3e-05</text>
<text x="156" y="867.267" font-size="13" text-anchor="end">2e-05</text>
<text x="156" y="900.933" font-size="13" text-anchor="end">1e-05</text>
<text x="156" y="933.6" font-size="13" text-anchor="end">0</text>
<text x="247.1" y="946.1" font-size="10.3" text-anchor="middle">2018-06-13 00:03:12</text>
<text x="394" y="946.1" font-size="10.3" text-anchor="middle">2018-06-13 00:43:12</text>
<text transform="translate(114.5,829) rotate(-90)" font-family="'Liberation Sans',sans-serif" font-size="15.3" text-anchor="middle">no_conv.</text>
<text x="688.5" y="706.7" font-size="18" font-style="italic" text-anchor="middle">Ch 4: H1:TCS-ITMY_HWS_PROBE_PRISM_Y</text>
<rect x="541.5" y="728.5" width="294" height="202" fill="#fff"/>
<path d="M623.5 728.5V930.5" stroke="#d5d5d5" stroke-width="1.1"/><path d="M769.5 728.5V930.5" stroke="#d5d5d5" stroke-width="1.1"/><path d="M549.5 728.5V930.5" stroke="#d5d5d5" stroke-width="1.1" stroke-dasharray="5 3"/><path d="M696.5 728.5V930.5" stroke="#d5d5d5" stroke-width="1.1" stroke-dasharray="5 3"/><path d="M541.5 779.5H835.5" stroke="#d5d5d5" stroke-width="1.1"/><path d="M541.5 829.5H835.5" stroke="#d5d5d5" stroke-width="1.1"/><path d="M541.5 880.5H835.5" stroke="#d5d5d5" stroke-width="1.1"/><path d="M541.5 753.5H835.5" stroke="#d5d5d5" stroke-width="1.1" stroke-dasharray="5 3"/><path d="M541.5 804.5H835.5" stroke="#d5d5d5" stroke-width="1.1" stroke-dasharray="5 3"/><path d="M541.5 854.5H835.5" stroke="#d5d5d5" stroke-width="1.1" stroke-dasharray="5 3"/><path d="M541.5 905.5H835.5" stroke="#d5d5d5" stroke-width="1.1" stroke-dasharray="5 3"/>
<g fill="none" stroke-width="1.1" stroke-linejoin="round" clip-path="none">
<polyline points="542.2,819.8 544.5,801 548.1,826.3 552,834.9 555.4,836.9 559.4,842.2 566.7,836.4 570.6,841.5 574.5,849.3 577.6,844.5 585.4,853.5 588.5,840.3 592.7,849.3 596.7,849.3 599.4,814.3 603.6,823.2 607.1,824.4 610.7,809.5 614.4,807.4 618.5,818.2 621.6,817.5 625.8,824 629.7,826.3 636.2,812.3 640.5,813.4 643.6,791.4 647.5,818.2 651.4,826 654.8,826.6 658.4,822.9 662.3,802.2 666.2,790.6 669.3,771.6 673.5,767.3 676.7,770.4 684.3,758.3 687.4,764.2 691.7,746.8 696,744.4 698.4,746.8 702.7,757.4 706.3,756.2 709.4,738.3 713.7,758.7 717.3,742.2 724.3,761.5 728.3,742.6 733.8,741.6 739.3,735.5 746.3,766.3 750.6,741.6 753.5,763.5 757.8,745.6 761.2,744.4 764.3,747.1 768.5,756.2 772.6,742.6 776.5,756.2 779.5,736.3 783.8,750.1 786.8,749.5 790.5,742.6 794.8,749.5 798.4,742.6 801.5,757.4 805.7,749.3 809.6,743.2 816.7,757.4 819.8,758.7 823.4,750.7 827.4,757.4 832,745.6 835,746.5" stroke="#ff0000"/>
<polyline points="542.2,841.8 544.5,839.5 548.1,845.3 552,847.6 555.4,847.6 559.4,850.9 562.9,852.4 570.6,854.3 574.5,862.3 577.6,861.3 581.5,864.4 585.4,861.3 589.3,861.3 592.7,862.8 596.7,863.3 599.4,845.7 603.6,852.7 607.1,854.6 610.7,848.1 614.4,834.4 618.5,843.1 621.6,834.4 624.2,836.4 629.7,836.4 632.8,834.9 636.2,831 640.5,830.2 643.6,821.7 647.5,837.2 651.4,836.9 658.4,833.3 662.3,820.1 666.2,804.6 669.3,797.6 673.5,797.1 676.7,793.7 680.9,791.4 691.1,791.3 696,779.4 698.4,780.2 702.7,779.4 706.3,777 709.4,773.5 713.7,783.3 717.3,775.7 724.3,779.4 728.3,779.4 732,772.7 735.6,770.9 739.3,768.8 742.6,777 746.3,774.5 750.6,769.3 753.5,776.3 764.3,769.6 768.9,769 772.6,761.7 776.5,765.4 779.5,763.5 783.8,767.2 787.4,767.2 794.8,762.3 798.4,763.2 801.8,767.6 805.7,765.6 809.6,766.3 812.4,765.4 816.7,769.3 819.8,768.8 823.4,763.2 827.4,767.6 832,765.4 835,765.4" stroke="#bc8f8f"/>
<polyline points="542.2,853.5 544.5,853.5 548.1,858.2 552,859.4 555.4,857.4 559.4,861.3 562.9,861.3 566.7,862.8 574.5,872.6 581.5,876.5 585.4,870.6 588.5,874.5 596.7,874.5 599.4,883.5 603.6,879.4 607.1,879.9 610.2,881 614.4,861.7 618.5,862 622.7,848.8 625.8,845.7 629.7,845.7 632.8,847.3 636.2,841.8 640.5,840 643.6,845 647.5,848.1 651.4,856.1 654.8,845.7 658.4,842.6 662.3,837.2 666.2,822.4 669.3,818.2 672.8,818.5 676.7,811.6 680.9,816.2 684.3,809.5 687.4,814.7 691.1,814.1 694.8,802.2 698.4,798.3 701.8,797.3 706.3,799.5 709.4,792.8 713.7,805.4 720.4,793.4 724.6,793.4 728.7,809.5 732,803.8 735.6,801.3 739.3,786.7 742.3,791 746.3,781.8 753.5,789.5 757.8,786.3 760.6,787.3 768.5,784.3 772.6,778.8 776.5,776.6 779.5,776.6 783.8,780.2 787.4,778.5 790.5,779.4 794.5,771.8 798.4,776.3 801.5,775.7 805.5,790.4 809.6,780.2 812.4,776.6 816.7,777.6 819.8,779.4 823.4,772.7 827.4,779.4 832,777.6 835,776.3" stroke="#008b00"/>
</g>
<rect x="541.5" y="728.5" width="294" height="202" fill="none" stroke="#000" stroke-width="1.2"/>
<text x="532" y="732.1" font-size="13" text-anchor="end">-1.3e-05</text>
<text x="532" y="782.6" font-size="13" text-anchor="end">-1.4e-05</text>
<text x="532" y="833.1" font-size="13" text-anchor="end">-1.5e-05</text>
<text x="532" y="883.6" font-size="13" text-anchor="end">-1.6e-05</text>
<text x="532" y="934.1" font-size="13" text-anchor="end">-1.7e-05</text>
<text x="622.8" y="946.1" font-size="10.3" text-anchor="middle">2018-06-13 00:03:12</text>
<text x="770" y="946.1" font-size="10.3" text-anchor="middle">2018-06-13 00:43:12</text>
<text transform="translate(477,829) rotate(-90)" font-family="'Liberation Sans',sans-serif" font-size="15.3" text-anchor="middle">no_conv.</text>
<text x="1065" y="706.7" font-size="18" font-style="italic" text-anchor="middle">Ch 7: H1:SUS-SR3_M1_DAMP_P_INMON</text>
<rect x="918.5" y="728.5" width="293" height="202" fill="#fff"/>
<path d="M999.5 728.5V930.5" stroke="#d5d5d5" stroke-width="1.1"/><path d="M1146.5 728.5V930.5" stroke="#d5d5d5" stroke-width="1.1"/><path d="M926.5 728.5V930.5" stroke="#d5d5d5" stroke-width="1.1" stroke-dasharray="5 3"/><path d="M1073.5 728.5V930.5" stroke="#d5d5d5" stroke-width="1.1" stroke-dasharray="5 3"/><path d="M918.5 753.5H1211.5" stroke="#d5d5d5" stroke-width="1.1"/><path d="M918.5 804.5H1211.5" stroke="#d5d5d5" stroke-width="1.1"/><path d="M918.5 854.5H1211.5" stroke="#d5d5d5" stroke-width="1.1"/><path d="M918.5 905.5H1211.5" stroke="#d5d5d5" stroke-width="1.1"/><path d="M918.5 779.5H1211.5" stroke="#d5d5d5" stroke-width="1.1" stroke-dasharray="5 3"/><path d="M918.5 829.5H1211.5" stroke="#d5d5d5" stroke-width="1.1" stroke-dasharray="5 3"/><path d="M918.5 880.5H1211.5" stroke="#d5d5d5" stroke-width="1.1" stroke-dasharray="5 3"/>
<g fill="none" stroke-width="1.1" stroke-linejoin="round" clip-path="none">
<polyline points="917.5,781.6 921,774.7 924.6,772.4 928.4,778.5 932.4,769.4 935.6,772.4 940.6,772.4 943.5,770.9 946.3,786.4 950.3,782.5 954.5,787.3 957.7,783.5 961.2,785.4 965.9,781.3 968.8,781.3 972.2,774.7 976.6,776.2 979.5,771.5 983.5,779.1 987.3,776.2 990.5,776.6 994.5,785.4 998.3,772.4 1001.8,775.3 1009.4,775.3 1012.6,771.5 1016.3,773.4 1020.1,776.2 1023.3,773.2 1027.1,772.4 1031.5,781.6 1034.6,773.7 1038.4,785.4 1041,785.4 1042.8,783.2 1049.2,759.6 1052.9,761.4 1056.5,768.4 1063,741.9 1064.7,737.2 1068.2,758.3 1071.6,774.4 1075.1,772.4 1078.7,758.3 1082.7,759.6 1086.3,757.7 1089.7,741 1093.1,763.3 1097.2,770.3 1100.6,761.8 1104.2,757.7 1108.2,780 1115.5,782.9 1119.3,771.5 1123.1,770.5 1126.9,774.4 1132.6,771.3 1137.4,764.3 1142,770.3 1144.8,783.2 1147.7,785.4 1152.1,779.1 1156.6,748.4 1159.7,770.3 1163.5,768.6 1170.4,787.3 1174.2,776.6 1178,783.5 1181.8,782.5 1185.6,780 1189.4,773.2 1192.5,776.2 1196.6,796.5 1200.1,789.6 1203.3,789.2 1207.4,784.4 1210.8,786.7" stroke="#ff0000"/>
<polyline points="917.5,842.6 921,841.2 924.6,833.4 928.4,831.5 932.4,830.9 935.6,830.5 940,834.7 943.5,834.7 946.3,847.3 950.3,842.6 953.2,842 957.7,838.4 965.9,838.4 968.8,833.4 972.2,829.4 976.6,830.5 979.5,827.7 983.5,831.1 987.3,832.5 990.5,831.5 993.6,832.5 996.8,831.1 1001.6,825.2 1005.6,830.9 1009.4,832.5 1012.6,831.5 1016.3,832.5 1020.1,834.7 1023.3,829.4 1027.1,830.5 1030.9,830.2 1034.6,828.6 1038.4,834.4 1042.8,833.1 1045.4,828.6 1049.2,832.5 1052.9,831.5 1056.5,832.4 1060.5,826.2 1064.4,827.5 1067.6,830.5 1071.4,826.4 1075.1,830.5 1078.6,832.5 1082.5,827.7 1086.3,825.6 1093.4,820.5 1097.9,829 1100.6,831.5 1104.2,830.5 1108.2,832.5 1112.8,836.3 1120,836.3 1123.1,837.6 1126.9,833.1 1134.5,829.4 1138.3,832.8 1142,834.7 1145.8,838.4 1148.4,835.9 1159.7,828.6 1163.5,833.1 1167.3,840.3 1170.4,836.3 1178,836.3 1181.4,833.4 1189.4,839.1 1192.5,845.4 1195.7,847.3 1198.8,846.9 1203.3,842.6 1207.4,848.5 1210.8,844.1" stroke="#bc8f8f"/>
<polyline points="917.4,901.4 920.7,903.4 924.5,888 928.7,883.3 935.5,898.6 939.6,902.5 943.4,884.5 946.4,902.5 950.6,895.4 954.4,908.4 957.5,893.3 961.4,903.4 965.3,889.5 968.5,893.3 972.7,899.6 979.7,884.5 983.5,889.2 987.4,892.4 990.6,881.5 993.9,880.3 998.6,890.4 1001.6,888.6 1005.5,895.4 1009.2,889.5 1012.8,892.7 1016.3,891.2 1020.4,885.7 1023.4,896.6 1027.2,883.3 1032.3,885.7 1034.6,890.4 1038.2,891.6 1042.3,887.4 1045.6,896.6 1049.4,883.3 1053.5,886.2 1060.6,897.5 1064.5,916.6 1067,917.5 1071.3,885.7 1075.6,887.4 1078.8,891.6 1081.7,889.8 1087,885.3 1090,886.8 1097.6,891.2 1100.4,896.6 1104.7,892.4 1108.6,897.1 1112.4,897.1 1115.3,910.4 1119.5,889.5 1123.4,899.6 1126.6,890.4 1130.4,892.4 1134.6,883.3 1137.8,889.5 1141.3,888.6 1145.4,904.5 1148.7,882.7 1152.3,889.5 1156.4,884.5 1159.6,887.2 1163.7,887.2 1167.3,900.4 1170.6,892.4 1174.4,899.6 1178.5,904.5 1182,891.2 1185.6,888.4 1189.1,895.4 1192.6,910.1 1196.8,910.1 1200.3,917.5 1203.6,893.7 1207.4,901.4 1210.9,897.1" stroke="#008b00"/>
</g>
<rect x="918.5" y="728.5" width="293" height="202" fill="none" stroke="#000" stroke-width="1.2"/>
<text x="908.2" y="757.55" font-size="13" text-anchor="end">-674.2</text>
<text x="908.2" y="808.05" font-size="13" text-anchor="end">-674.4</text>
<text x="908.2" y="858.55" font-size="13" text-anchor="end">-674.6</text>
<text x="908.2" y="909.05" font-size="13" text-anchor="end">-674.8</text>
<text x="999" y="946.1" font-size="10.3" text-anchor="middle">2018-06-13 00:03:12</text>
<text x="1147" y="946.1" font-size="10.3" text-anchor="middle">2018-06-13 00:43:12</text>
<text transform="translate(861.7,829) rotate(-90)" font-family="'Liberation Sans',sans-serif" font-size="15.3" text-anchor="middle">no_conv.</text>
<rect x="93.5" y="104.5" width="121" height="63" fill="#fff" stroke="#000" stroke-width="1.2"/>
<path d="M103 117.5H141" stroke="#ff0000" stroke-width="1.3"/>
<text x="158" y="121.7" font-size="12.8" font-weight="bold" fill="#0000ff" letter-spacing="2.6">MAX</text>
<path d="M103 135.5H141" stroke="#bc8f8f" stroke-width="1.3"/>
<text x="158" y="139.7" font-size="12.8" font-weight="bold" fill="#0000ff" letter-spacing="2.6">MEAN</text>
<path d="M103 154.5H141" stroke="#008b00" stroke-width="1.3"/>
<text x="158" y="157.7" font-size="12.8" font-weight="bold" fill="#0000ff" letter-spacing="2.6">MIN</text>
</g>
<g shape-rendering="crispEdges">
<g id="hTL"><rect x="160" y="723" width="10" height="10" fill="#232323"/><rect x="166" y="729" width="4" height="4" fill="#000"/><rect x="165" y="728" width="5" height="1" fill="#fff"/><rect x="165" y="728" width="1" height="5" fill="#fff"/></g>
<g id="hTR"><rect x="454" y="723" width="10" height="10" fill="#232323"/><rect x="454" y="729" width="5" height="4" fill="#000"/><rect x="454" y="728" width="6" height="1" fill="#fff"/><rect x="459" y="728" width="1" height="5" fill="#fff"/></g>
<g id="hBL"><rect x="160" y="925" width="10" height="10" fill="#232323"/><rect x="166" y="925" width="4" height="5" fill="#000"/><rect x="165" y="930" width="5" height="1" fill="#fff"/><rect x="165" y="925" width="1" height="6" fill="#fff"/></g>
<g id="hBR"><rect x="454" y="925" width="10" height="10" fill="#232323"/><rect x="454" y="925" width="5" height="5" fill="#000"/><rect x="454" y="930" width="6" height="1" fill="#fff"/><rect x="459" y="925" width="1" height="6" fill="#fff"/></g>
</g>
<!-- toolbar icons -->
<g id="icons" fill="none" stroke="#000">
<path d="M13.1 116.6L17.6 112.3L21.6 116.6L17.3 120.6Z" stroke-width="1.4"/>
<path d="M20 119L27.3 126.2" stroke-width="2.2"/>
<path d="M18 174.2H26.2" stroke-width="3.2"/><path d="M13 174.2L18.2 169.4V179Z" fill="#000" stroke="none"/>
<path d="M42 175.4H50.5" stroke-width="3.2"/><path d="M55 175.4L49.8 170.6V180.2Z" fill="#000" stroke="none"/>
<path d="M19.45 197V206" stroke-width="3.2"/><path d="M19.45 210.2L14.6 205H24.3Z" fill="#000" stroke="none"/>
<path d="M48.6 209V200" stroke-width="3.2"/><path d="M48.6 195.7L43.8 201H53.4Z" fill="#000" stroke="none"/>
</g>
<g font-family="'Liberation Sans',sans-serif" fill="#000">
<text x="39.8" y="119.8" font-size="10.6" font-weight="bold">A</text>
<text transform="translate(48.6,125.6) scale(0.72,1)" font-size="14" font-weight="bold">S</text>
<text transform="translate(12.6,153.9) scale(1.24,1)" font-size="19.2">Z</text>
<text transform="translate(43.4,152.9) scale(1.1,1)" font-size="18" font-weight="bold">z</text>
</g>
<!-- title bar buttons -->
<g fill="none" stroke="#fff">
<path d="M1202.1 16.2V9.5" stroke-width="2.2"/><path d="M1198.2 12.2L1202.1 8.2L1206 12.2" stroke-width="2.2" stroke-linejoin="miter"/>
<path d="M1216.8 15.1H1223.2" stroke-width="2.3"/>
<path d="M1234.3 9V15.5H1241.6V9Z" stroke-width="1.4"/><path d="M1233.6 9H1242.3" stroke-width="2.4"/>
<path d="M1252 7.8L1260.2 16M1260.2 7.8L1252 16" stroke-width="2.2"/>
</g>
<!-- window icon -->
<g>
<rect x="6" y="3.1" width="16" height="15.8" rx="1.6" fill="#fdfdfd"/>
<rect x="12" y="4.2" width="4.5" height="1.6" fill="#b5b5b5"/>
<rect x="11" y="17" width="6.5" height="1" fill="#c2c2c2"/>
<rect x="8.3" y="6.3" width="11.2" height="9.6" fill="#d8d8d6" stroke="#a4a4a4" stroke-width="0.8"/>
<path d="M9 15.1L18.9 7.1" stroke="#7a5cf0" stroke-width="1.6"/>
<path d="M9 15.1L18.9 7.1" stroke="#f05c8c" stroke-width="0.8" stroke-dasharray="1.2 1.6"/>
<rect x="11.3" y="14" width="1.9" height="1.7" fill="#0a9a1a"/>
<rect x="13.9" y="13" width="2.1" height="2.7" fill="#0a9a1a"/>
<rect x="16.2" y="12" width="2" height="3.7" fill="#0a9a1a"/>
<rect x="11.8" y="7.2" width="1" height="1.6" fill="#555"/>
</g>
<!-- mouse cursor -->
<g>
<path d="M1015.1 193.7V218.4L1020.8 213.8L1023.7 219.4L1027.3 218L1024.9 211.7L1031.6 210.7Z" fill="#fff" stroke="#bdbdbd" stroke-width="0.6"/>
<path d="M1016.4 197V214.9L1020.7 211.4L1023.9 217.6L1025.8 216.8L1022.9 210.2L1028 209.5Z" fill="#000"/>
</g>

</svg>
</body></html>
